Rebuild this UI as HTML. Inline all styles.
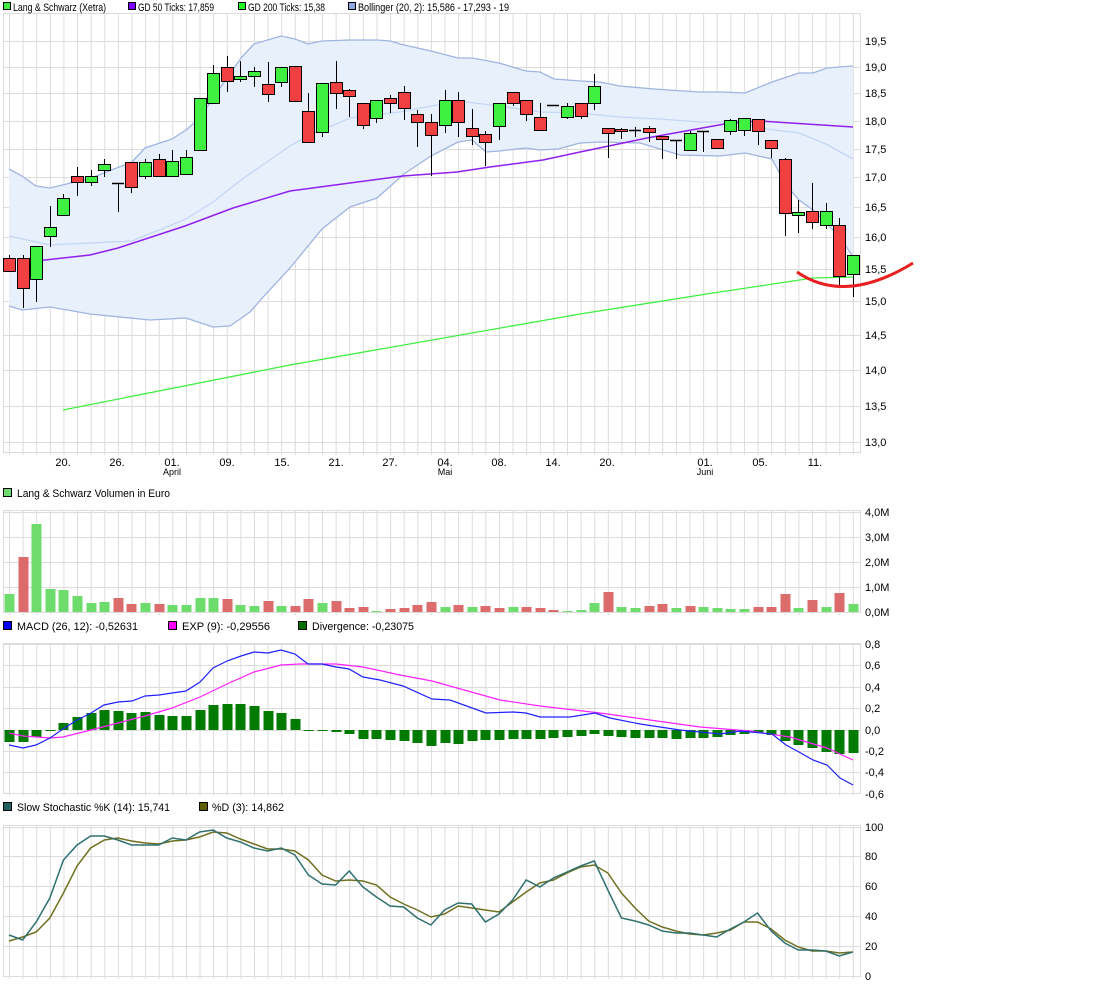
<!DOCTYPE html>
<html><head><meta charset="utf-8"><style>
body{margin:0;background:#fff;width:1094px;height:986px;overflow:hidden}
svg{display:block;font-family:"Liberation Sans",sans-serif;font-size:11px}
</style></head><body>
<svg id="s" width="1094" height="986" xmlns="http://www.w3.org/2000/svg">
<g id="bg"></g>
<g id="fg"></g>
<g fill="#000">
<rect x="3.5" y="2.5" width="7" height="7" fill="#40f040" stroke="#000"/>
<text x="13" y="11" textLength="93" lengthAdjust="spacingAndGlyphs">Lang &amp; Schwarz (Xetra)</text>
<rect x="128.5" y="2.5" width="7" height="7" fill="#8000ff" stroke="#000"/>
<text x="138" y="11" textLength="76" lengthAdjust="spacingAndGlyphs">GD 50 Ticks: 17,859</text>
<rect x="238.5" y="2.5" width="7" height="7" fill="#20ff20" stroke="#000"/>
<text x="248" y="11" textLength="77" lengthAdjust="spacingAndGlyphs">GD 200 Ticks: 15,38</text>
<rect x="348.5" y="2.5" width="7" height="7" fill="#90a8e0" stroke="#000"/>
<text x="358" y="11" textLength="151" lengthAdjust="spacingAndGlyphs">Bollinger (20, 2): 15,586 - 17,293 - 19</text>
<rect x="3.5" y="488.5" width="8" height="8" fill="#6ddc6d" stroke="#000"/>
<text x="17" y="497" textLength="153" lengthAdjust="spacingAndGlyphs">Lang &amp; Schwarz Volumen in Euro</text>
<rect x="3.5" y="621.5" width="8" height="8" fill="#0000ff" stroke="#000"/>
<text x="17" y="630" textLength="121" lengthAdjust="spacingAndGlyphs">MACD (26, 12): -0,52631</text>
<rect x="168.5" y="621.5" width="8" height="8" fill="#ff00ff" stroke="#000"/>
<text x="182" y="630" textLength="88" lengthAdjust="spacingAndGlyphs">EXP (9): -0,29556</text>
<rect x="298.5" y="621.5" width="8" height="8" fill="#007000" stroke="#000"/>
<text x="312" y="630" textLength="102" lengthAdjust="spacingAndGlyphs">Divergence: -0,23075</text>
<rect x="3.5" y="802.5" width="8" height="8" fill="#1f6060" stroke="#000"/>
<text x="17" y="811" textLength="153" lengthAdjust="spacingAndGlyphs">Slow Stochastic %K (14): 15,741</text>
<rect x="199.5" y="802.5" width="8" height="8" fill="#606000" stroke="#000"/>
<text x="212" y="811" textLength="72" lengthAdjust="spacingAndGlyphs">%D (3): 14,862</text>
<g font-size="11">
<text x="865" y="45">19,5</text><text x="865" y="71">19,0</text><text x="865" y="97">18,5</text>
<text x="865" y="125">18,0</text><text x="865" y="153">17,5</text><text x="865" y="181">17,0</text>
<text x="865" y="211">16,5</text><text x="865" y="241">16,0</text><text x="865" y="273">15,5</text>
<text x="865" y="305">15,0</text><text x="865" y="339">14,5</text><text x="865" y="374">14,0</text>
<text x="865" y="410">13,5</text><text x="865" y="446">13,0</text>
<text x="865" y="516">4,0M</text><text x="865" y="541">3,0M</text><text x="865" y="566">2,0M</text>
<text x="865" y="591">1,0M</text><text x="865" y="616">0,0M</text>
<text x="865" y="648">0,8</text><text x="865" y="669">0,6</text><text x="865" y="691">0,4</text>
<text x="865" y="712">0,2</text><text x="865" y="734">0,0</text><text x="865" y="755">-0,2</text>
<text x="865" y="776">-0,4</text><text x="865" y="798">-0,6</text>
<text x="865" y="831">100</text><text x="865" y="860">80</text><text x="865" y="890">60</text>
<text x="865" y="920">40</text><text x="865" y="950">20</text><text x="865" y="980">0</text>
</g>
<g text-anchor="middle">
<text x="63" y="466">20.</text><text x="117" y="466">26.</text><text x="172" y="466">01.</text>
<text x="227" y="466">09.</text><text x="282" y="466">15.</text><text x="336" y="466">21.</text>
<text x="390" y="466">27.</text><text x="445" y="466">04.</text><text x="499" y="466">08.</text>
<text x="553" y="466">14.</text><text x="607" y="466">20.</text><text x="705" y="466">01.</text>
<text x="760" y="466">05.</text><text x="815" y="466">11.</text>
</g>
<g font-size="9" text-anchor="middle">
<text x="172" y="475">April</text><text x="445" y="475">Mai</text><text x="705" y="475">Juni</text>
</g>
</g>
</svg>
<script>
const NS="http://www.w3.org/2000/svg",bg=document.getElementById('bg'),fg=document.getElementById('fg');
function el(p,t,a){const e=document.createElementNS(NS,t);for(const k in a)e.setAttribute(k,a[k]);p.appendChild(e);return e;}
const X=i=>9+13.61*i, L=3, R=860, G="#dcdcdc";
function panel(t,b,hs){el(bg,'rect',{x:L+.5,y:t+.5,width:R-L,height:b-t,fill:'#fff',stroke:G});
 for(let i=0;i<63;i++)el(bg,'line',{x1:X(i)+.5,x2:X(i)+.5,y1:t,y2:b+3,stroke:G});
 hs.forEach(y=>el(bg,'line',{x1:L,x2:R,y1:y+.5,y2:y+.5,stroke:G}));}
panel(13,452,[41,67,93,121,149,177,207,237,269,301,335,370,406,442]);
panel(510,612,[512,537,562,587]);
panel(643,793,[644,665,687,708,730,751,772]);
panel(825,976,[827,856,886,916,946]);
function pts(a){return a.map(p=>p.join(',')).join(' ');}
const up=[[9,169],[22,176],[36,186],[50,188],[91,178],[132,162],[145,148],[172,139],[186,130],[200,118],[213,98],[241,58],[254,44],[281,36],[295,39],[308,44],[322,41],[350,40],[377,40],[390,41],[404,45],[431,51],[458,58],[472,58],[499,63],[526,71],[540,72],[554,79],[581,81],[600,82],[620,86],[654,89],[699,92],[722,92],[745,93],[772,82],[799,73],[813,73],[827,68],[853,66]];
const lo=[[9,306],[22,310],[50,307],[90,314],[150,320],[186,318],[213,327],[230,326],[250,312],[265,295],[290,268],[322,229],[350,207],[377,198],[404,174],[431,156],[458,142],[472,140],[486,152],[499,151],[526,148],[540,150],[558,149],[580,143],[600,142],[640,143],[680,155],[720,156],[745,153],[772,159],[786,185],[799,200],[813,210],[840,237],[853,257]];
el(fg,'polygon',{points:pts(up.concat(lo.slice().reverse())),fill:'#e8f0fc'});
el(fg,'polyline',{points:pts(up),fill:'none',stroke:'#9fb4e0','stroke-width':1.3});
el(fg,'polyline',{points:pts(lo),fill:'none',stroke:'#9fb4e0','stroke-width':1.3});
el(fg,'polyline',{points:pts([[9,236],[50,245],[132,241],[186,219],[213,202],[241,180],[290,146],[308,136],[350,118],[400,112],[458,101],[499,106],[540,112],[580,113],[620,117],[660,119],[700,122],[740,122],[767,129],[799,133],[826,144],[853,159]]),fill:'none',stroke:'#c4d6f6','stroke-width':1.3});
el(fg,'polyline',{points:pts([[36,261],[90,255],[118,248],[185,226],[233,208],[290,191],[403,176],[457,172],[490,167],[543,160],[580,152],[647,138],[730,123],[760,121],[853,127]]),fill:'none',stroke:'#9020f0','stroke-width':1.5});
el(fg,'polyline',{points:pts([[63,410],[290,365],[580,314],[713,293],[813,278],[853,277]]),fill:'none',stroke:'#40f040','stroke-width':1.3});
const C=[[258,271,255,271,'r'],[258,288,255,308,'r'],[246,279,246,302,'g'],[227,236,206,247,'g'],[198,215,194,215,'g'],[176,182,167,196,'r'],[176,182,170,186,'g'],[164,170,159,177,'g'],[183,183,183,212,'d'],[162,187,162,193,'r'],[162,176,159,179,'g'],[159,176,154,176,'r'],[161,176,150,176,'g'],[157,174,150,174,'g'],[98,150,98,150,'g'],[73,103,65,103,'g'],[67,81,56,92,'r'],[76,79,61,82,'g'],[71,76,67,87,'g'],[84,94,62,102,'r'],[67,82,67,87,'g'],[66,101,66,101,'r'],[111,142,93,142,'r'],[83,132,83,137,'g'],[82,93,61,109,'r'],[90,96,89,117,'r'],[103,125,103,129,'r'],[100,118,100,123,'g'],[98,103,95,113,'r'],[92,108,86,120,'r'],[114,122,110,147,'r'],[122,135,114,176,'r'],[100,125,90,133,'g'],[100,122,92,137,'r'],[128,136,109,145,'r'],[134,142,131,166,'r'],[103,126,103,140,'g'],[92,103,92,106,'r'],[100,114,100,121,'r'],[117,130,103,130,'r'],[105,105,105,105,'d'],[106,117,103,119,'g'],[103,116,103,119,'r'],[86,103,74,110,'g'],[128,133,128,158,'r'],[129,131,128,139,'r'],[130,130,127,137,'d'],[128,132,126,142,'r'],[136,139,136,159,'r'],[140,140,140,159,'d'],[133,150,131,150,'g'],[131,131,131,152,'d'],[139,148,139,148,'r'],[120,131,119,135,'g'],[118,130,118,136,'g'],[119,131,119,145,'r'],[140,148,140,158,'r'],[159,213,158,236,'r'],[212,215,200,233,'g'],[211,222,183,229,'r'],[211,225,203,229,'g'],[225,276,218,286,'r'],[255,274,255,297,'g']];
C.forEach((c,i)=>{const x=Math.round(X(i));
 el(fg,'line',{x1:x+.5,x2:x+.5,y1:c[2],y2:c[3],stroke:'#000','stroke-width':1});
 if(c[4]=='d')el(fg,'line',{x1:x-6,x2:x+6,y1:c[0]+.5,y2:c[0]+.5,stroke:'#000','stroke-width':1.5});
 else el(fg,'rect',{x:x-5.5,y:c[0]+.5,width:12,height:Math.max(c[1]-c[0],2),fill:c[4]=='g'?'#40f040':'#f04040',stroke:'#000','stroke-width':1});});
el(fg,'path',{d:'M797,272 Q845,305 913,263',fill:'none',stroke:'#e82020','stroke-width':3});
const V="594g,557r,524g,589g,590g,596g,603g,602g,598r,604r,603g,604r,605g,605g,598g,598g,599r,605g,606g,601r,606g,606r,599r,603g,601r,608r,607r,611g,609r,608r,605r,602r,607g,605r,607g,606r,608r,607g,607r,608r,610r,611g,610g,603g,592r,607g,608g,606r,604r,608g,606r,607g,608g,609g,609g,607r,607r,594r,608g,600r,607g,593r,604g".split(',');
V.forEach((v,i)=>{const y=parseInt(v);el(fg,'rect',{x:Math.round(X(i))-4.5,y:y,width:10,height:612-y,fill:v.slice(-1)=='g'?'#6ddc6d':'#dc6b6b'});});
const D=[742,742,737,731,723,717,713,710,711,713,712,715,716,716,710,705,704,704,706,711,713,719,731,730.5,732,734,739,739,740,741,743,746,743,744,741,740,740,739,739,739,738,737,736,734,736,737,738,738,738,739,738,738,737,735,734,733,735,741,745,748,752,754,753];
D.forEach((d,i)=>{const y=Math.min(d,730),h=Math.max(Math.abs(d-730),1);el(fg,'rect',{x:Math.round(X(i))-4.5,y:y,width:10,height:h,fill:'#007a00'});});
el(fg,'polyline',{points:pts([[9,733],[23,736],[50,738],[63,737],[91,730],[118,723],[145,716],[172,708],[200,697],[227,684],[254,672],[281,665],[300,664],[336,664],[363,667],[400,675],[432,681],[500,700],[540,706],[600,713],[650,720],[700,727],[750,731],[790,737],[827,748],[853,760]]),fill:'none',stroke:'#ff20ff','stroke-width':1.2});
el(fg,'polyline',{points:pts([[9,745],[23,748],[36,745],[50,738],[63,729],[77,720],[91,713],[104,705],[118,702],[132,701],[145,696],[159,695],[172,693],[186,691],[200,682],[213,668],[227,661],[241,656],[254,652],[268,653],[281,650],[295,654],[308,664],[322,664],[336,667],[349,669],[363,677],[380,680],[403,686],[432,699],[450,700],[486,713],[513,712],[526,713],[540,717],[570,717],[595,713],[610,718],[640,724],[680,730],[720,734],[740,731],[772,734],[786,745],[799,752],[813,760],[827,765],[840,778],[853,785]]),fill:'none',stroke:'#2020ff','stroke-width':1.2});
const K=[935,940,922,898,860,845,836,836,840,845,845,845,838,840,832,830,838,842,848,851,848,855,875,884,885,871,887,897,906,907,918,925,910,903,904,922,914,900,880,887,878,872,866,861,890,918,921,925,931,933,933,935,937,929,922,913,931,943,950,950,951,956,952];
const Dd=[941,937,932,918,893,866,848,840,838,841,843,844,841,840,837,832,833,839,844,849,849,851,860,875,881,880,881,885,897,904,910,917,914,906,908,910,912,902,892,883,880,873,867,865,873,893,908,921,927,931,934,935,933,930,922,922,929,940,947,951,951,953,952];
el(fg,'polyline',{points:pts(Dd.map((y,i)=>[X(i),y])),fill:'none',stroke:'#707020','stroke-width':1.5});
el(fg,'polyline',{points:pts(K.map((y,i)=>[X(i),y])),fill:'none',stroke:'#2f7070','stroke-width':1.5});
</script>
</body></html>
